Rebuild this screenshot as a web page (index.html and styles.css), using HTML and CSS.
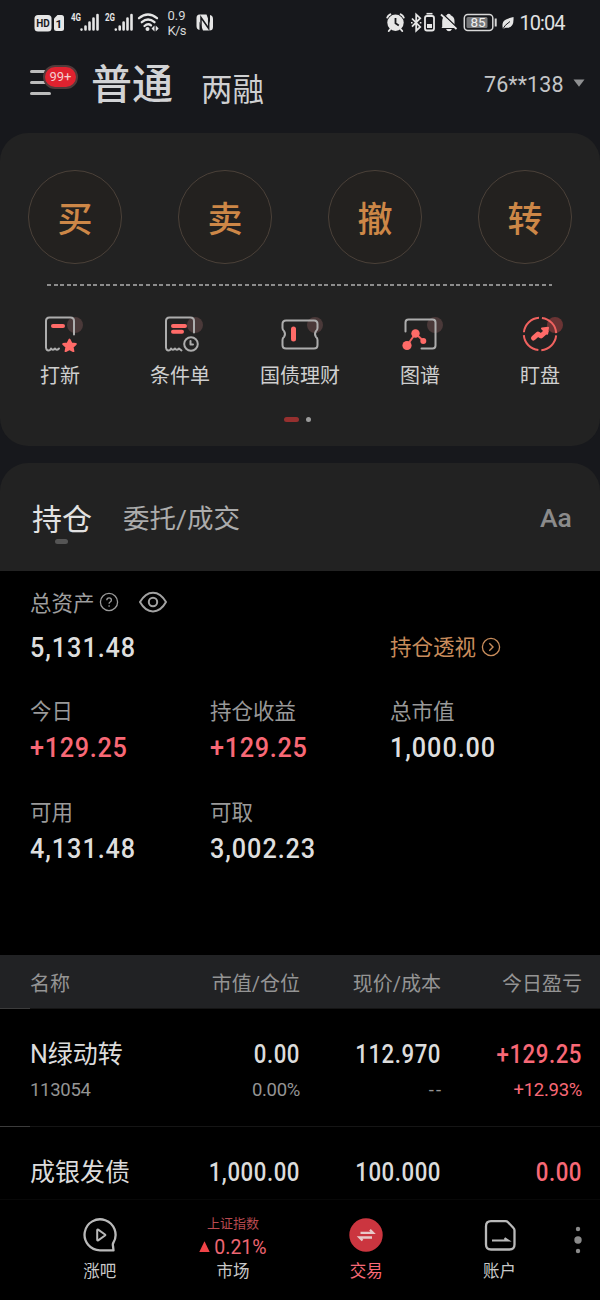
FILE: index.html
```html
<!DOCTYPE html>
<html lang="zh-CN">
<head>
<meta charset="utf-8">
<title>交易</title>
<link rel="stylesheet" href="styles.css">
</head>
<body>
<div class="app">
  <div class="status">
    <svg class="status-left" viewBox="0 0 230 46" width="230" height="46">
      <rect x="34.5" y="15" width="17" height="16.5" rx="3.5" fill="#e6e6e6"/>
      <text x="36.2" y="27" class="st-hd" textLength="13.5" lengthAdjust="spacingAndGlyphs">HD</text>
      <path d="M57.5 15H61.500Q64 15 64 17.500V28.500Q64 31 61.500 31H56.500Q54 31 54 28.500V18.500Z" fill="#e6e6e6"/>
      <text x="55.500" y="27.500" class="st-hd">1</text>
      <text x="71" y="21" class="st-g" textLength="10" lengthAdjust="spacingAndGlyphs">4G</text>
      <g stroke="#e6e6e6" stroke-width="2.6" stroke-linecap="round">
        <path d="M81.500 29.500v.1M85.500 26.500v3M89.500 22.500v7M93.500 18.500v11M97.500 15v14.500"/>
        <path d="M115.800 29.500v.1M119.700 26.500v3M123.600 22.500v7M127.500 18.500v11M131.500 15v14.500"/>
      </g>
      <text x="105" y="21" class="st-g" textLength="10" lengthAdjust="spacingAndGlyphs">2G</text>
      <g fill="none" stroke="#e6e6e6" stroke-width="2.300" stroke-linecap="round">
        <path d="M139 18.200Q148 10.800 157 18.200M141.800 22.200Q148 16.800 154.500 22.200M144.500 26Q148 22.800 151 25.400"/>
      </g>
      <circle cx="147.500" cy="29" r="2" fill="#e6e6e6"/>
      <path d="M154.500 25.500v6l-3-3zM155.700 25.500v6l3-3z" fill="#e6e6e6"/>
      <text x="167.500" y="20" class="st-net" textLength="18">0.9</text>
      <text x="167.500" y="35" class="st-net" textLength="19">K/s</text>
      <path d="M199.500 14.500h7l3.500 9v-8.500q3 .5 3 4v8q0 3.500-3.500 3.500h-6.500l-3.500-9v8.500q-3-.5-3-4v-8q0-3.500 3-3.500z" fill="#e6e6e6"/>
      <path d="M201 28.500V17.500L208.700 28.500V17" fill="none" stroke="#18191d" stroke-width="1.500"/>
    </svg>
    <svg class="status-right" viewBox="380 0 220 46" width="220" height="46">
      <circle cx="395.500" cy="22.800" r="8.200" fill="#e6e6e6"/>
      <path d="M387.300 17.500q.8-2.200 3-3.200M403.700 17.500q-.8-2.200-3-3.200M390 29.500l-1.200 1.500M401 29.500l1.200 1.500" stroke="#e6e6e6" stroke-width="2" stroke-linecap="round" fill="none"/>
      <path d="M395.500 18v5.200l3.300 2.200" stroke="#18191d" stroke-width="1.800" fill="none"/>
      <path d="M412 18.500l8.200 8.500-4 3.700v-16.200l4 3.700-8.200 8.500" stroke="#e6e6e6" stroke-width="1.800" fill="none"/>
      <path d="M411 22.700h1.600M419.800 22.700h1.600" stroke="#e6e6e6" stroke-width="1.600"/>
      <rect x="425" y="16" width="9" height="14.500" rx="2" fill="none" stroke="#e6e6e6" stroke-width="1.800"/>
      <path d="M426.500 13.700h6" stroke="#e6e6e6" stroke-width="1.600"/>
      <rect x="427" y="24" width="5" height="4" fill="#e6e6e6"/>
      <path d="M442.200 27V21q0-4.500 4.500-5.700q0-1.500 2-1.500t2 1.500q3.800 1.500 3.800 5.700v5l2 2h-15zM446 29h6q-1 2.300-3 2.300t-3-2.300z" fill="#e6e6e6"/>
      <path d="M442.800 14L458 28.500" stroke="#18191d" stroke-width="1.600"/>
      <path d="M441 14.500L456.500 29" stroke="#e6e6e6" stroke-width="1.800"/>
      <rect x="464.300" y="14.500" width="28.500" height="16" rx="3.500" fill="none" stroke="#d8d8d8" stroke-width="1.500"/>
      <rect x="466.500" y="17" width="21" height="11" rx="1.500" fill="#77787a"/>
      <path d="M495.700 18.500v8" stroke="#d8d8d8" stroke-width="2"/>
      <text x="470.500" y="27.200" class="st-bat" textLength="15">85</text>
      <path d="M503 29q-2-7 3-9.500q3-1.500 7.500-2.500q.8 12-8 10.700z" fill="#e6e6e6"/>
      <path d="M502.500 29.500q2-4.500 7.500-8" stroke="#18191d" stroke-width="1" fill="none"/>
      <text x="519.500" y="30" class="st-time" textLength="46">10:04</text>
    </svg>
  </div>

  <header class="header">
    <div class="menu">
      <span class="menu-line"></span><span class="menu-line"></span><span class="menu-line"></span>
      <span class="badge">99+</span>
    </div>
    <div class="title">普通</div>
    <div class="subtitle">两融</div>
    <div class="account">76**138</div>
    <svg class="caret" width="12" height="8" viewBox="0 0 12 8"><path d="M.5.500h11L6 7.700z" fill="#8f9092"/></svg>
  </header>

  <section class="card actions">
    <div class="circles">
      <div class="circle">买</div><div class="circle">卖</div><div class="circle">撤</div><div class="circle">转</div>
    </div>
    <div class="dashes"></div>
    <div class="tools">
      <div class="tool">
        <svg width="48" height="40" viewBox="0 0 48 40">
          <circle class="halo" cx="27" cy="12" r="8"/>
          <path class="ln" d="M38 22.500V9q0-3.500-3.500-3.500H13.500Q10 5.500 10 9V35.500q.3 3 2.500 3q1.800 0 2.500-2q1.500 2.500 4 0q1.500 2.500 4 0"/>
          <path class="red-ln" d="M17 14h10"/>
          <path d="M33.500 27.500l2 4 4.400.5-3.200 3 .8 4.300-4-2.100-4 2.100.8-4.300-3.200-3 4.400-.5z" fill="#ff6b68" stroke="#ff6b68" stroke-width="1.800" stroke-linejoin="round"/>
        </svg>
        <span>打新</span>
      </div>
      <div class="tool">
        <svg width="48" height="40" viewBox="0 0 48 40">
          <circle class="halo" cx="27" cy="12" r="8"/>
          <path class="ln" d="M38 20.500V9q0-3.500-3.500-3.500H13.500Q10 5.500 10 9V35.500q.3 3 2.500 3q1.800 0 2.500-2q1.500 2.500 4 0q1.500 2.500 4 0l2.500 2"/>
          <path class="red-ln" d="M17 14h12M17 19.800h9"/>
          <circle class="ln" cx="35" cy="32" r="6.800"/>
          <path class="ln" d="M34.500 29v3.500h2.500"/>
        </svg>
        <span>条件单</span>
      </div>
      <div class="tool">
        <svg width="48" height="40" viewBox="0 0 48 40">
          <circle class="halo" cx="27" cy="12" r="8"/>
          <path class="ln" d="M10 8.500H38q3.500 0 3.500 3.500v4q0 2-1.500 3q-2 3 0 6q1.500 1 1.500 3v5q0 3.500-3.500 3.500H10q-3.500 0-3.500-3.500v-5q0-2 1.500-3q2-3 0-6q-1.500-1-1.500-3v-4q0-3.500 3.500-3.500z"/>
          <path class="red-ln thick" d="M17.500 17v10"/>
        </svg>
        <span>国债理财</span>
      </div>
      <div class="tool">
        <svg width="48" height="40" viewBox="0 0 48 40">
          <circle class="halo" cx="27" cy="12" r="8"/>
          <path class="ln" d="M9.500 19.500V10.500q0-3 3-3H36.500q3 0 3 3v23q0 3-3 3h-11"/>
          <path d="M11 33.500L19.500 21.500L27.500 29" stroke="#f0625f" stroke-width="2" fill="none"/>
          <circle cx="11" cy="33.500" r="4.600" fill="#ff6b68"/><circle cx="19.500" cy="21.500" r="4.200" fill="#ff6b68"/><circle cx="27.300" cy="29" r="3" fill="#ff6b68"/>
        </svg>
        <span>图谱</span>
      </div>
      <div class="tool">
        <svg width="48" height="40" viewBox="0 0 48 40">
          <circle class="halo warm" cx="27" cy="12" r="8"/>
          <circle cx="24" cy="22" r="16.200" fill="none" stroke="#f0625f" stroke-width="2" stroke-dasharray="22.400 3.040" stroke-dashoffset="-1.520"/>
          <path d="M17.500 26L22 22L25 24L30 19.500" fill="none" stroke="#ff6b68" stroke-width="5" stroke-linecap="round" stroke-linejoin="round"/>
          <path d="M26 16.500l6-.8-.8 6z" fill="#ff6b68" stroke="#ff6b68" stroke-width="2" stroke-linejoin="round"/>
        </svg>
        <span>盯盘</span>
      </div>
    </div>
    <div class="pager"><i class="on"></i><i class="off"></i></div>
  </section>

  <section class="card tabs">
    <div class="tab active">持仓</div>
    <div class="tab second">委托/成交</div>
    <div class="font-size">Aa</div>
  </section>

  <section class="summary">
    <div class="assets-label"><span>总资产</span>
      <svg width="20" height="20" viewBox="0 0 20 20"><circle cx="10" cy="10" r="8.600" fill="none" stroke="#9b9b9b" stroke-width="1.300"/><path d="M7.800 8.300q0-2.500 2.300-2.500t2.300 2.200q0 1.200-1.200 2t-1.100 1.800M10.100 13.200v1.500" fill="none" stroke="#9b9b9b" stroke-width="1.300"/></svg>
      <svg class="eye" width="30" height="24" viewBox="0 0 30 24"><path d="M2 12C9-.5 21-.5 28 12C21 24.500 9 24.500 2 12z" fill="none" stroke="#a2a2a2" stroke-width="2" stroke-linejoin="round"/><circle cx="15" cy="12" r="4.200" fill="none" stroke="#a2a2a2" stroke-width="2"/></svg>
    </div>
    <div class="assets">
      <div class="num">5,131.48</div>
      <div class="lens"><span>持仓透视</span><svg width="20" height="20" viewBox="0 0 20 20"><circle cx="10" cy="10" r="8.600" fill="none" stroke="#c98d5c" stroke-width="1.300"/><path d="M8.300 6.300l3.700 3.700-3.700 3.700" fill="none" stroke="#c98d5c" stroke-width="1.400"/></svg></div>
    </div>
    <div class="metrics">
      <div class="metric"><span>今日</span><b class="num up">+129.25</b></div>
      <div class="metric"><span>持仓收益</span><b class="num up">+129.25</b></div>
      <div class="metric"><span>总市值</span><b class="num">1,000.00</b></div>
      <div class="metric"><span>可用</span><b class="num">4,131.48</b></div>
      <div class="metric"><span>可取</span><b class="num">3,002.23</b></div>
    </div>
  </section>

  <section class="table">
    <div class="row head"><div>名称</div><div>市值/仓位</div><div>现价/成本</div><div>今日盈亏</div></div>
    <div class="row item">
      <div><p class="name">N绿动转</p><p class="sub">113054</p></div>
      <div><p class="value">0.00</p><p class="sub">0.00%</p></div>
      <div><p class="value">112.970</p><p class="sub dash">--</p></div>
      <div class="up"><p class="value">+129.25</p><p class="sub">+12.93%</p></div>
    </div>
    <div class="row item last">
      <div><p class="name">成银发债</p></div>
      <div><p class="value">1,000.00</p></div>
      <div><p class="value">100.000</p></div>
      <div class="up"><p class="value">0.00</p></div>
    </div>
  </section>

  <nav class="nav">
    <div class="nav-item">
      <svg width="36" height="36" viewBox="0 0 36 36"><path d="M31.500 33.300H18A15.500 15.500 0 1 1 31.500 25.500q-1 1.500-.5 3.500z" fill="none" stroke="#b9b9b9" stroke-width="2.300" stroke-linejoin="round"/><path d="M15.200 13.200v9.600q0 1 1 .5l6.800-4.800q.7-.5 0-1l-6.800-4.800q-1-.5-1 .5z" fill="none" stroke="#b9b9b9" stroke-width="2"/></svg>
      <span>涨吧</span>
    </div>
    <div class="nav-item index">
      <em>上证指数</em>
      <div class="change"><svg width="11" height="11" viewBox="0 0 11 11"><path d="M5.500.200l5.200 10.800H.300z" fill="#f04448"/></svg>0.21%</div>
      <span>市场</span>
    </div>
    <div class="nav-item current">
      <svg width="36" height="36" viewBox="0 0 36 36"><circle cx="18" cy="18" r="16.700" fill="#cb353f"/><path d="M12.500 15.800h12.500l-3-3M24 20.500H11.500l3 3" fill="none" stroke="#e8c9c9" stroke-width="2.300"/></svg>
      <span>交易</span>
    </div>
    <div class="nav-item">
      <svg width="36" height="36" viewBox="0 0 36 36"><path d="M9 4.200H23.500q1.500 0 2.500 1L31.500 11q1 1 1 2.500V27.500q0 5-5 5H9q-5 0-5-5V9.200q0-5 5-5z" fill="none" stroke="#b9b9b9" stroke-width="2.300" stroke-linejoin="round"/><path d="M10 23.500H26l-3.500-2.300" fill="none" stroke="#b9b9b9" stroke-width="2.200"/></svg>
      <span>账户</span>
    </div>
    <svg class="more" width="10" height="28" viewBox="0 0 10 28"><g fill="#8b8b8b"><circle cx="5" cy="3" r="2.200"/><circle cx="5" cy="14" r="3.700"/><circle cx="5" cy="25" r="2.200"/></g></svg>
  </nav>
</div>
</body>
</html>
```
FILE: styles.css
```css
* { box-sizing: border-box; }
body { margin: 0; background: #000; }
.app {
  width: 600px; height: 1300px; overflow: hidden;
  display: flex; flex-direction: column;
  background: #17181c; color: #dcdcdc;
  font-family: Roboto, "Noto Sans CJK SC", sans-serif;
}
p { margin: 0; }

.status { display: flex; justify-content: space-between; height: 46px; flex: none; }
.st-hd { font-size: 11.5px; font-weight: 700; fill: #18191d; }
.st-g { font-size: 10.5px; font-weight: 700; fill: #e6e6e6; }
.st-net { font-size: 13px; fill: #d8d8d8; }
.st-bat { font-size: 13.500px; font-weight: 400; fill: #f0f0f0; }
.st-time { font-size: 20px; fill: #e2e2e2; }

.header { display: flex; align-items: flex-start; height: 87px; flex: none; padding-left: 30px; }
.menu { position: relative; width: 61px; padding-top: 24px; display: flex; flex-direction: column; gap: 8px; }
.menu-line { width: 21px; height: 3px; border-radius: 2px; background: #bcbcbc; }
.badge {
  position: absolute; left: 13px; top: 18.500px; width: 35px; height: 24px;
  border-radius: 12px; border: 2px solid #513b3b; background: #e0222f; color: #f4cfd0;
  font-size: 13px; font-weight: 400; line-height: 20px; text-align: center;
}
.title { width: 110px; font-size: 41px; line-height: 60px; padding-top: 9px; font-weight: 500; color: #d2d3d5; }
.subtitle { width: 283px; font-size: 31.500px; line-height: 44px; padding-top: 23px; color: #cfd0d2; }
.account { width: 89px; font-size: 21.500px; line-height: 30px; padding-top: 24px; color: #c4c5c7; letter-spacing: .1px; }
.caret { margin-top: 33px; }

.card { background: #222; flex: none; }
.actions { height: 313px; border-radius: 28px; padding-top: 37px; margin-bottom: 17px; }
.circles { display: flex; justify-content: space-between; padding: 0 28px; }
.circle {
  width: 94px; height: 94px; border-radius: 50%; border: 1px solid #4b4139; background: #23211f;
  color: #cd8747; font-size: 35px; line-height: 99px; text-align: center; font-weight: 500;
}
.dashes {
  height: 2px; margin: 20px 48px 0 47px;
  background: repeating-linear-gradient(90deg, #8c8c8c 0 4px, transparent 4px 6.600px);
}
.tools { display: grid; grid-template-columns: repeat(5, 120px); margin-top: 26px; }
.tool { display: flex; flex-direction: column; align-items: center; font-size: 20px; line-height: 30px; color: #cfcfcf; }
.tool span { margin-top: 9px; }
.halo { fill: #4a3939; transform: translate(12px, 1px); }
.halo.warm { fill: #6b3434; }
.ln { fill: none; stroke: #adadad; stroke-width: 2; stroke-linecap: round; stroke-linejoin: round; }
.red-ln { fill: none; stroke: #ff6b68; stroke-width: 4; stroke-linecap: round; }
.red-ln.thick { stroke-width: 5; }
.pager { display: flex; align-items: center; gap: 7px; height: 6px; padding-left: 284px; margin-top: 25px; }
.pager .on { width: 15px; height: 5px; border-radius: 3px; background: #96302f; }
.pager .off { width: 5px; height: 5px; border-radius: 50%; background: #9b9b9b; }

.tabs { height: 108px; border-radius: 28px 28px 0 0; display: flex; padding-left: 32px; background: #222; }
.tab.active { width: 91px; padding-top: 36px; font-size: 30px; line-height: 42px; color: #e2e2e2; font-weight: 400; }
.tab.active::after { content: ""; display: block; width: 13px; height: 5px; border-radius: 3px; margin: -2px 0 0 23px; background: #555; }
.tab.second { width: 417px; padding-top: 35px; font-size: 26.500px; line-height: 42px; color: #acacac; }
.font-size { padding-top: 34px; font-size: 26.500px; line-height: 42px; color: #8b8b8b; font-weight: 500; }

.summary { background: #000; height: 384px; flex: none; padding: 16px 30px 0; }
.assets-label { display: flex; align-items: center; height: 30px; font-size: 21.500px; line-height: 30px; color: #9e9e9e; }
.assets-label span { padding-top: 3px; }
.assets-label svg { margin-left: 4px; }
.assets-label .eye { margin-left: 19px; }
.num {
  font-size: 28px; line-height: 34px; font-weight: 500; color: #dedede;
  letter-spacing: 1.050px; transform: scaleX(.9); transform-origin: left;
}
.up, .num.up { color: #f86876; }
.num.up { letter-spacing: .8px; }
.assets { display: grid; grid-template-columns: 360px 1fr; align-items: center; margin-top: 14px; height: 34px; }
.lens { display: flex; align-items: center; gap: 5px; font-size: 21.500px; line-height: 30px; color: #c98d5c; }
.lens svg { margin-bottom: 3px; }
.metrics { display: grid; grid-template-columns: repeat(3, 180px); grid-auto-rows: 101px; margin-top: 32px; }
.metric { display: flex; flex-direction: column; }
.metric span { font-size: 21.500px; line-height: 30px; color: #999; }
.metric .num { margin-top: 4px; }

.table { background: #000; height: 244px; flex: none; }
.row { position: relative; display: grid; grid-template-columns: 120px 150px 141px 141px; padding-left: 30px; text-align: right; }
.row > :first-child { text-align: left; }
.row::after { content: ""; position: absolute; left: 0; right: 0; bottom: 0; height: 1px; background: linear-gradient(90deg, #3c3c3c 30px, #151515 30px); }
.head { height: 54px; line-height: 58px; font-size: 20px; background: #212224; color: #949494; }
.item { height: 118px; padding-top: 29px; font-size: 25px; font-weight: 500; line-height: 34px; }
.item.last::after { display: none; }
.item .name { font-weight: 400; }
.item .value { letter-spacing: .6px; transform: scaleX(.89); transform-origin: right; }
.item .sub { font-size: 18.500px; line-height: 26px; margin-top: 5px; font-weight: 400; color: #949494; letter-spacing: -.3px; }
.item .sub.dash { letter-spacing: 2px; margin-right: -2px; }
.item .up .sub { color: #f86876; }

.nav { position: relative; height: 101px; flex: none; background: #000; border-top: 1px solid #080808; display: grid; grid-template-columns: repeat(4, 133.300px); padding-left: 33px; }
.nav-item { display: flex; flex-direction: column; align-items: center; padding-top: 17px; font-size: 16.500px; line-height: 24px; color: #c9c9c9; }
.nav-item span { margin-top: 7px; }
.nav-item.current { color: #f86876; }
.index { padding-top: 14px; }
.index em { font-style: normal; font-size: 13px; line-height: 20px; color: #b84a50; }
.index .change { display: flex; align-items: center; gap: 4px; font-size: 19.500px; line-height: 28px; color: #ee6672; }
.index .change svg { margin-bottom: 3px; }
.index span { margin-top: -2px; }
.more { position: absolute; left: 572.500px; top: 26px; }
```
